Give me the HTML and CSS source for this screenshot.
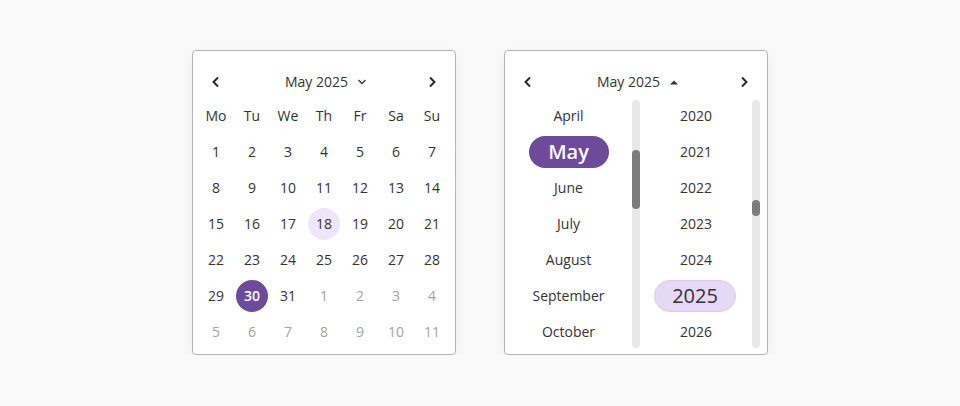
FILE: index.html
```html
<!DOCTYPE html>
<html lang="en">
<head>
    <meta charset="UTF-8">
    <title>Date pickers</title>
    <link rel="stylesheet" href="styles.css">
</head>
<body>
    <div class="pickers">
        <!-- month view -->
        <div class="card">
            <div class="header">
                <span class="nav"><svg width="10" height="12" viewBox="0 0 10 12"><polyline points="7,1.5 2.5,6 7,10.5" /></svg></span>
                <span class="title">May 2025 <svg class="caret" width="10" height="6" viewBox="0 0 10 6"><polyline points="1.5,1 5,4.5 8.5,1" /></svg></span>
                <span class="nav"><svg width="10" height="12" viewBox="0 0 10 12"><polyline points="3,1.5 7.5,6 3,10.5" /></svg></span>
            </div>
            <div class="days">
                <span>Mo</span><span>Tu</span><span>We</span><span>Th</span><span>Fr</span><span>Sa</span><span>Su</span>
                <span>1</span><span>2</span><span>3</span><span>4</span><span>5</span><span>6</span><span>7</span>
                <span>8</span><span>9</span><span>10</span><span>11</span><span>12</span><span>13</span><span>14</span>
                <span>15</span><span>16</span><span>17</span><span><b class="today">18</b></span><span>19</span><span>20</span><span>21</span>
                <span>22</span><span>23</span><span>24</span><span>25</span><span>26</span><span>27</span><span>28</span>
                <span>29</span><span><b class="picked">30</b></span><span>31</span><span class="other">1</span><span class="other">2</span><span class="other">3</span><span class="other">4</span>
                <span class="other">5</span><span class="other">6</span><span class="other">7</span><span class="other">8</span><span class="other">9</span><span class="other">10</span><span class="other">11</span>
            </div>
        </div>

        <!-- month / year lists -->
        <div class="card">
            <div class="header">
                <span class="nav"><svg width="10" height="12" viewBox="0 0 10 12"><polyline points="7,1.5 2.5,6 7,10.5" /></svg></span>
                <span class="title">May 2025 <svg class="caret up" width="10" height="6" viewBox="0 0 10 6"><polygon points="1,5.5 5,1.5 9,5.5" /></svg></span>
                <span class="nav"><svg width="10" height="12" viewBox="0 0 10 12"><polyline points="3,1.5 7.5,6 3,10.5" /></svg></span>
            </div>
            <div class="lists">
                <div class="list months">
                    <span>April</span>
                    <span><b class="pill-month">May</b></span>
                    <span>June</span>
                    <span>July</span>
                    <span>August</span>
                    <span>September</span>
                    <span>October</span>
                </div>
                <div class="track"><div class="thumb thumb-months"></div></div>
                <div class="list years">
                    <span>2020</span>
                    <span>2021</span>
                    <span>2022</span>
                    <span>2023</span>
                    <span>2024</span>
                    <span><b class="pill-year">2025</b></span>
                    <span>2026</span>
                </div>
                <div class="track"><div class="thumb thumb-years"></div></div>
            </div>
        </div>
    </div>
</body>
</html>
```

FILE: styles.css
```css
:root {
    --text: #333333;
    --muted: #a3a3a3;
    --purple: #6d4a9a;
    --purple-soft: #efe7f9;
    --purple-pill: #e6d9f5;
    --border: #b3b3b3;
    --track: #e8e8e8;
    --thumb: #7b7b7b;
}

* {
    margin: 0;
    padding: 0;
    box-sizing: border-box;
}

body {
    font-family: 'Open Sans', sans-serif;
    font-size: 14px;
    color: var(--text);
    background: #f9f9f9;
    display: flex;
    justify-content: center;
    padding-top: 50px;
}

.pickers {
    display: flex;
    gap: 48px;
}

.card {
    width: 264px;
    background: #fff;
    border: 1px solid var(--border);
    border-radius: 4px;
    padding: 15px 0 4px;
    box-shadow: 0 4px 12px rgba(0,0,0,0.06);
}

.header {
    display: flex;
    align-items: center;
    justify-content: space-between;
    height: 31px;
    margin-bottom: 1px;
    padding: 0 5px;
}

.nav {
    width: 36px;
    display: flex;
    justify-content: center;
}

.nav svg polyline {
    fill: none;
    stroke: #2a2a2a;
    stroke-width: 2;
}

.title {
    display: flex;
    align-items: center;
    gap: 9px;
    margin-left: 4px;
}

.caret polyline {
    fill: none;
    stroke: #333;
    stroke-width: 1.3;
}

.caret.up polygon {
    fill: #333;
}

.days {
    display: grid;
    grid-template-columns: repeat(7, 36px);
    grid-auto-rows: 36px;
    padding: 0 5px;
}

.days span {
    display: flex;
    align-items: center;
    justify-content: center;
    padding-bottom: 1px;
}

.days .other {
    color: var(--muted);
}

.days b {
    font-weight: 400;
    width: 32px;
    height: 32px;
    border-radius: 50%;
    display: flex;
    align-items: center;
    justify-content: center;
}

.days .today {
    background: var(--purple-soft);
}

.days .picked {
    background: var(--purple);
    color: #fff;
    font-weight: 600;
}

.lists {
    display: flex;
    padding-right: 7px;
}

.list {
    display: flex;
    flex-direction: column;
}

.list span {
    height: 36px;
    display: flex;
    align-items: center;
    justify-content: center;
    padding-bottom: 1px;
}

.months {
    width: 127px;
}

.years {
    width: 112px;
}

.track {
    width: 8px;
    height: 248px;
    margin-top: 2px;
    background: var(--track);
    border-radius: 4px;
}

.thumb {
    background: var(--thumb);
    border-radius: 4px;
}

.thumb-months {
    margin-top: 50px;
    height: 59px;
}

.thumb-years {
    margin-top: 100px;
    height: 16px;
}

.pill-month {
    width: 80px;
    height: 32px;
    border-radius: 16px;
    background: var(--purple);
    color: #fff;
    font-size: 20px;
    font-weight: 600;
    display: flex;
    align-items: center;
    justify-content: center;
}

.pill-year {
    width: 82px;
    height: 32px;
    border-radius: 16px;
    background: var(--purple-pill);
    border: 1px solid #dbc8f0;
    font-size: 20px;
    font-weight: 400;
    display: flex;
    align-items: center;
    justify-content: center;
    margin-left: -2px;
}
```
